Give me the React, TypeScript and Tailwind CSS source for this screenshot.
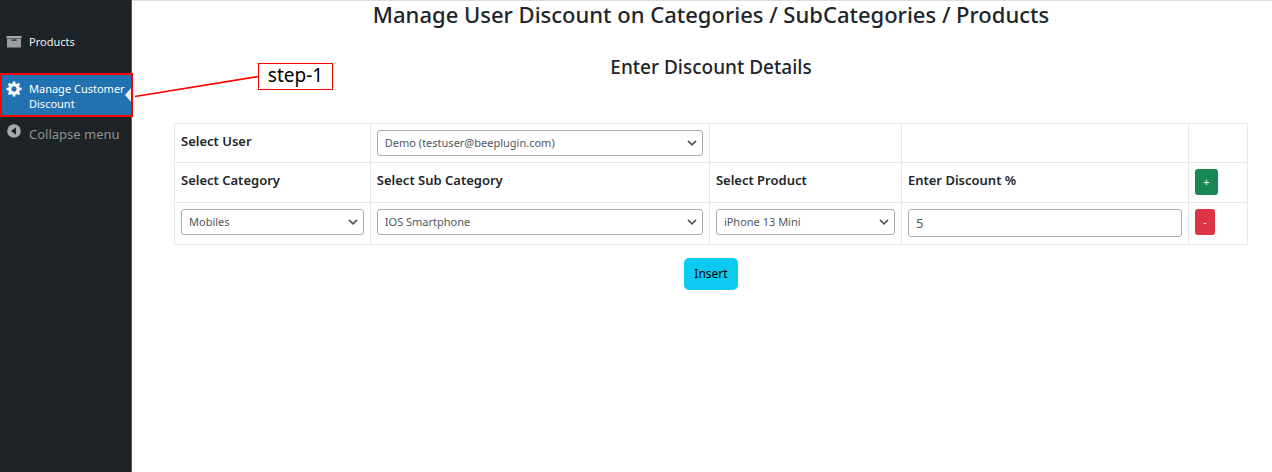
import type { ReactNode } from "react";

function ProductsIcon() {
  return (
    <svg width="16" height="14" viewBox="0 0 16 14" className="shrink-0" aria-hidden="true">
      <path fill="#a7aaad" d="M0.500 1h15v2H0.500z" />
      <path fill="#9a9ea2" fillRule="evenodd" d="M1 3.500h14v9H1zM5.500 4.400v1.400h5V4.400z" />
    </svg>
  );
}

function GearIcon() {
  return (
    <svg width="16" height="16" viewBox="0.500 1.500 18 18" className="shrink-0" aria-hidden="true">
      <path
        fill="#fff"
        d="M18 12h-2.180c-.170.700-.440 1.350-.810 1.930l1.540 1.540-2.100 2.100-1.540-1.540c-.580.360-1.230.630-1.910.790V19H8v-2.180c-.680-.160-1.330-.430-1.910-.790l-1.540 1.540-2.120-2.120 1.540-1.540c-.360-.580-.630-1.230-.790-1.910H1V9.030h2.170c.160-.700.440-1.350.800-1.940L2.430 5.550l2.100-2.100 1.540 1.540c.580-.370 1.240-.640 1.930-.810V2h3v2.180c.680.160 1.330.430 1.910.790l1.540-1.540 2.120 2.120-1.540 1.540c.360.590.640 1.240.800 1.940H18V12zm-8.500 1.500c1.660 0 3-1.340 3-3s-1.340-3-3-3-3 1.340-3 3 1.340 3 3 3z"
      />
    </svg>
  );
}

function CollapseIcon() {
  return (
    <svg width="16" height="18" viewBox="0 0 16 18" className="shrink-0" aria-hidden="true">
      <circle cx="8" cy="9" r="6.800" fill="#a7aaad" />
      <path d="M10 5.300v7.400L5 9z" fill="#1d2327" />
    </svg>
  );
}

function SelectBox({ label, value }: { label: string; value: string }) {
  return (
    <div className="relative">
      <select
        aria-label={label}
        defaultValue={value}
        className="block h-[26px] w-full appearance-none rounded-[3px] border border-[#a9abae] bg-white pr-6 pl-[7px] text-[11px] text-[#50575e]"
      >
        <option>{value}</option>
      </select>
      <svg
        width="10"
        height="6"
        viewBox="0 0 10 6"
        className="pointer-events-none absolute top-[10px] right-[6px]"
        aria-hidden="true"
      >
        <path d="M1 0.800l4 4 4-4" fill="none" stroke="#555" strokeWidth="1.700" />
      </svg>
    </div>
  );
}

function Cell({ children }: { children?: ReactNode }) {
  return <td className="border border-[#e6e8ea] px-[6px] py-[6px] align-top">{children}</td>;
}

function HeadCell({ children }: { children: ReactNode }) {
  return (
    <th className="border border-[#e6e8ea] px-[6px] py-[7px] text-left align-top text-[13px] leading-5 font-semibold">
      {children}
    </th>
  );
}

function Sidebar() {
  return (
    <nav className="w-[132px] shrink-0 border-r border-[#50565a] bg-[#1d2327] pt-8 text-[11px] text-[#f0f0f1]">
      <a href="#products" className="flex h-5 items-center gap-[7px] pl-[6px]">
        <ProductsIcon />
        Products
      </a>
      <div className="relative mt-[22px]">
        <a
          href="#discount"
          aria-current="page"
          className="flex h-[42px] gap-[7px] bg-[#2271b1] pt-[7px] pl-[6px] leading-[15px] text-white"
        >
          <GearIcon />
          <span className="whitespace-nowrap">
            Manage Customer
            <br />
            Discount
          </span>
        </a>
        <svg width="6" height="14" viewBox="0 0 6 14" className="absolute top-[14px] right-0" aria-hidden="true">
          <path d="M6 0v14L0 7z" fill="#f0f0f1" />
        </svg>
        <div className="absolute -top-px -right-[2px] -bottom-px left-0 border-2 border-[#ff0000]" />
        <svg width="125" height="24" viewBox="0 0 125 24" className="absolute top-[1px] left-[134px]" aria-hidden="true">
          <path d="M1 21.500L125 1.500" stroke="#ff0000" strokeWidth="1.700" />
        </svg>
        <div className="absolute -top-[11px] left-[258px] flex h-[27px] w-[75px] items-center justify-center border border-[#ff0000] bg-white pb-[3px] text-[19px] leading-6 text-black">
          step-1
        </div>
      </div>
      <button type="button" className="mt-[6px] flex h-6 gap-[7px] pl-[6px] text-[13px] leading-6 text-[#8f9295]">
        <CollapseIcon />
        Collapse menu
      </button>
    </nav>
  );
}

export default function App() {
  return (
    <div className="flex min-h-screen bg-white font-['Noto_Sans',sans-serif] text-[#212529]">
      <Sidebar />
      <main className="min-w-0 flex-1 border-t border-[#dcdcde] pr-6 pl-[42px]">
        <h1 className="text-center text-[22px] leading-[26px] font-medium">
          Manage User Discount on Categories / SubCategories / Products
        </h1>
        <h2 className="mt-[26px] text-center text-[19px] leading-7 font-medium">Enter Discount Details</h2>
        <table className="mt-[42px] w-full table-fixed border-collapse">
          <colgroup>
            <col className="w-[18.25%]" />
            <col className="w-[31.600%]" />
            <col className="w-[17.900%]" />
            <col className="w-[26.750%]" />
            <col />
          </colgroup>
          <tbody>
            <tr className="h-[39px]">
              <HeadCell>Select User</HeadCell>
              <Cell>
                <SelectBox label="Select User" value="Demo (testuser@beeplugin.com)" />
              </Cell>
              <Cell />
              <Cell />
              <Cell />
            </tr>
            <tr className="h-10">
              <HeadCell>Select Category</HeadCell>
              <HeadCell>Select Sub Category</HeadCell>
              <HeadCell>Select Product</HeadCell>
              <HeadCell>Enter Discount %</HeadCell>
              <Cell>
                <button
                  type="button"
                  aria-label="Add row"
                  className="block h-[26px] w-[23px] rounded-[3px] bg-[#198754] text-[11px] text-white"
                >
                  +
                </button>
              </Cell>
            </tr>
            <tr className="h-[42px]">
              <Cell>
                <SelectBox label="Select Category" value="Mobiles" />
              </Cell>
              <Cell>
                <SelectBox label="Select Sub Category" value="IOS Smartphone" />
              </Cell>
              <Cell>
                <SelectBox label="Select Product" value="iPhone 13 Mini" />
              </Cell>
              <Cell>
                <input
                  type="text"
                  inputMode="numeric"
                  aria-label="Enter Discount %"
                  defaultValue="5"
                  className="block h-7 w-full rounded-[3px] border border-[#a9abae] bg-white px-[7px] text-[13px] text-[#50575e]"
                />
              </Cell>
              <Cell>
                <button
                  type="button"
                  aria-label="Remove row"
                  className="block h-[26px] w-5 rounded-[3px] bg-[#dc3545] text-[11px] text-white"
                >
                  -
                </button>
              </Cell>
            </tr>
          </tbody>
        </table>
        <div className="mt-[13px] flex justify-center">
          <button type="button" className="h-8 rounded-[5px] bg-[#0dcaf0] px-[10px] text-xs text-black">
            Insert
          </button>
        </div>
      </main>
    </div>
  );
}
